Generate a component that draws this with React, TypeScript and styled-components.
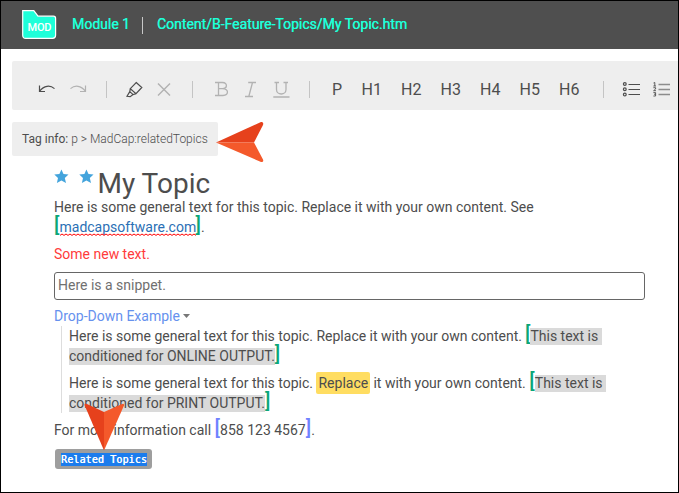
import React from "react";
import styled, { createGlobalStyle } from "styled-components";

const GlobalStyle = createGlobalStyle`
  * { box-sizing: border-box; }
  body { margin: 0; background: #fff; }
`;

const Frame = styled.div`
  position: relative;
  width: 679px;
  height: 493px;
  border: 1px solid #000;
  background: #fff;
  overflow: hidden;
  color: #4d4d4d;
  font-family: Roboto, "Liberation Sans", sans-serif;
  font-size: 14px;
`;

const Header = styled.header`
  display: flex;
  align-items: center;
  height: 48px;
  padding-left: 21px;
  background: #4f4f4f;
  color: #1effd9;
  font-weight: 400;
  line-height: 20px;
  white-space: nowrap;
`;

const HeaderText = styled.span<{ $width: number }>`
  width: ${(p) => p.$width}px;
  margin-top: -2px;
  text-shadow: 0.2px 0 currentColor;
`;

const HeaderRule = styled.span`
  width: 1px;
  height: 17px;
  margin: 0 14px;
  background: #c8c8c8;
`;

const Logo = styled.svg`
  display: block;
  width: 35px;
  height: 30px;
  margin-right: 15px;
`;

const Toolbar = styled.div`
  display: flex;
  align-items: center;
  height: 49px;
  margin: 12px 0 0 11px;
  padding: 8px 0 0 26px;
  background: #eee;
  border-radius: 2px 0 0 2px;
  white-space: nowrap;
`;

const Tool = styled.span<{ $width: number; $gap?: number }>`
  display: block;
  flex: none;
  width: ${(p) => p.$width}px;
  margin-right: ${(p) => p.$gap ?? 0}px;
  font-size: 16px;
  line-height: 18px;
  svg { display: block; overflow: visible; }
`;

const ToolRule = styled.span<{ $gap: number }>`
  flex: none;
  width: 1px;
  height: 17px;
  margin-right: ${(p) => p.$gap}px;
  background: #c4c4c4;
`;

const TagInfo = styled.div`
  width: 206px;
  height: 34px;
  margin: 12px 0 0 11px;
  padding-left: 10px;
  background: #eee;
  border-radius: 2px;
  font-size: 12px;
  line-height: 34px;
  white-space: nowrap;
`;

const TagPath = styled.span`
  font-weight: 300;
`;

const Topic = styled.main`
  margin-left: 53px;
  white-space: pre;
`;

const Title = styled.h1`
  display: flex;
  height: 41px;
  margin: 0;
  padding-top: 12px;
  font-size: 28px;
  font-weight: 400;
  line-height: 30px;
`;

const Star = styled.svg`
  width: 15px;
  height: 15px;
  margin: 1px 10px 0 0;
`;

const TitleText = styled.span`
  margin: 1px 0 0 -6.5px;
`;

const Line = styled.div<{ $top?: number; $color?: string }>`
  display: flex;
  align-items: center;
  height: 20px;
  margin-top: ${(p) => p.$top ?? 0}px;
  color: ${(p) => p.$color ?? "inherit"};
  line-height: 20px;
`;

const Link = styled.span`
  color: #2a6fb5;
`;

const Misspelled = styled.span`
  position: relative;
  display: block;
  width: 136px;
  height: 20px;
`;

const Squiggle = styled.svg`
  position: absolute;
  left: 0;
  top: 16px;
  width: 137px;
  height: 4px;
`;

const Bracket = styled.span<{ $color: string; $left?: number }>`
  flex: none;
  width: 5.5px;
  height: 20px;
  margin-left: ${(p) => p.$left ?? 0}px;
  color: ${(p) => p.$color};
  font-size: 20px;
  font-weight: 500;
  line-height: 17px;
`;

const Conditioned = styled.span`
  height: 17px;
  background: #dadada;
  line-height: 17px;
`;

const Highlight = styled.span`
  width: 54px;
  height: 22px;
  margin: 0 3.5px 0 -0.5px;
  padding-left: 2.5px;
  background: #ffdd61;
  border-radius: 2px;
  line-height: 22px;
`;

const Snippet = styled.div`
  width: 591px;
  height: 28px;
  margin-top: 8px;
  padding-left: 3px;
  border: 1px solid #666;
  border-radius: 3px;
  color: #707070;
  line-height: 25px;
`;

const Caret = styled.svg`
  width: 7px;
  height: 4px;
  margin: 0 0 0 3px;
`;

const DropDownBody = styled.div`
  height: 87px;
  margin: 1px 0 0 7px;
  padding-left: 7px;
  border-left: 1px solid #ddd;
`;

const RelatedButton = styled.button`
  display: block;
  width: 97px;
  height: 20px;
  margin: 9px 0 0 1px;
  padding: 0 5px 0 6px;
  border: 0;
  border-radius: 3px;
  background: #9e9e9e;
  color: #fff;
  font-family: "DejaVu Sans Mono", monospace;
  font-size: 10px;
  line-height: 13px;
`;

const Selected = styled.span`
  display: block;
  width: 86px;
  height: 13px;
  background: #1b7ced;
  font-weight: 400;
  letter-spacing: 0.12px;
  text-align: left;
  text-shadow: 0.3px 0 #fff;
`;

const Pointer = styled.svg<{ $x: number; $y: number }>`
  position: absolute;
  left: ${(p) => p.$x}px;
  top: ${(p) => p.$y}px;
`;

const GREEN = "#0ba678";
const BLUE = "#7082ff";

const squigglePoints = Array.from({ length: 69 }, (_, i) => `${i * 2},${i % 2 ? 1 : 2.4}`).join(" ");

const StarIcon = () => (
  <Star viewBox="0 0 15 15">
    <path fill="#44a4dc" d="M7.4 0.5 9.5 5.1 14.5 5.5 10.8 9 12 14 7.4 11.5 2.9 14 4 9 0.3 5.5 5.4 5.1Z" />
  </Star>
);

const Bold = () => (
  <svg width="14" height="15" fill="none" stroke="#b2b2b2" strokeWidth="1.3">
    <path d="M0 .5H7.5C13 .5 12.4 6.7 7.5 6.7H3.5M7.5 6.7C14.3 6.7 13.7 13.5 8 13.5H0M3.5.5V13.5" />
  </svg>
);
const Italic = () => (
  <svg width="12" height="15" fill="none" stroke="#b2b2b2" strokeWidth="1.3">
    <path d="M3.2.5H11M0 14.5H8M7.5.5 3.8 14.5" />
  </svg>
);
const Underline = () => (
  <svg width="17" height="16" fill="none" stroke="#b2b2b2" strokeWidth="1.3">
    <path d="M1.5.5H6M10.5.5H15M3.5.5V7.5C3.5 13.5 13 13.5 13 7.5V.5M.3 15H16.5" />
  </svg>
);

const ListIcon = ({ numbered = false }: { numbered?: boolean }) => (
  <svg width="17" height="15" fill="none" stroke={numbered ? "#8c8c8c" : "#4d4d4d"} strokeWidth="1">
    <path d="M5.5 2.5H17M5.5 7.5H17M5.5 12.5H17" strokeWidth={numbered ? 1.5 : 1} />
    {numbered ? (
      <path stroke="#4d4d4d" strokeWidth=".9" d="M.5 1 1.8.5V4M.4 4H3M.4 5.7H2.6V7L.6 8.7H3M.4 10.6H2.6V14H.4M1 12.2H2.6" />
    ) : (
      <g strokeWidth="1.2">
        <circle cx="1.8" cy="2" r="1.4" />
        <circle cx="1.8" cy="7.3" r="1.4" />
        <circle cx="1.8" cy="12.6" r="1.4" />
      </g>
    )}
  </svg>
);

export default function App() {
  return (
    <Frame>
      <GlobalStyle />
      <Header>
        <Logo viewBox="0 0 35 30">
          <path d="M.7.6H11.8L16 6.2H31.5Q33.6 6.2 33.6 8.3V25.3Q33.6 28.3 30.6 28.3H3.7Q.7 28.3.7 25.3Z" fill="#1effd9" stroke="#fff" strokeWidth="1.2" />
          <text x="5.5" y="21.2" fill="#fff" fontSize="11" fontWeight="500" textLength="24">MOD</text>
        </Logo>
        <HeaderText $width={56}>Module 1</HeaderText>
        <HeaderRule />
        <HeaderText $width={251}>Content/B-Feature-Topics/My Topic.htm</HeaderText>
      </Header>

      <Toolbar>
        <Tool $width={17} $gap={14}>
          <svg width="17" height="12" fill="none" stroke="#4d4d4d" strokeWidth="1.2">
            <path d="M1.5 1.5V7.5H7M1.7 7.1C6 1.5 12 .8 16.5 4.6" />
          </svg>
        </Tool>
        <Tool $width={17} $gap={20}>
          <svg width="17" height="12" fill="none" stroke="#b2b2b2" strokeWidth="1.2">
            <path d="M16.5 1.5V7.5H11M16.3 7.1C12 1.5 6 .8 1.5 4.6" />
          </svg>
        </Tool>
        <ToolRule $gap={19} />
        <Tool $width={17} $gap={14}>
          <svg width="17" height="16" fill="none" stroke="#4d4d4d" strokeWidth="1.2">
            <path d="M10.2 .5 15.8 5.5 10 11.7 4.3 6.6ZM4.3 6.6 3.8 9.6 7.2 12.6 10 11.7M3.8 9.6 1 14.3 4.2 14.7 7 12.6" />
          </svg>
        </Tool>
        <Tool $width={14} $gap={21}>
          <svg width="14" height="14" stroke="#b2b2b2" strokeWidth="1.5">
            <path d="M1 .5 13 12.5M13 .5 1 12.5" />
          </svg>
        </Tool>
        <ToolRule $gap={22} />
        <Tool $width={14} $gap={16}><Bold /></Tool>
        <Tool $width={12} $gap={16}><Italic /></Tool>
        <Tool $width={17} $gap={19}><Underline /></Tool>
        <ToolRule $gap={22} />
        <Tool $width={29.5}>P</Tool>
        <Tool $width={39.5}>H1</Tool>
        <Tool $width={39.5}>H2</Tool>
        <Tool $width={39.5}>H3</Tool>
        <Tool $width={39.5}>H4</Tool>
        <Tool $width={39.5}>H5</Tool>
        <Tool $width={44}>H6</Tool>
        <ToolRule $gap={19} />
        <Tool $width={17} $gap={13}><ListIcon /></Tool>
        <Tool $width={17}><ListIcon numbered /></Tool>
      </Toolbar>

      <TagInfo>Tag info: <TagPath>p &gt; MadCap:relatedTopics</TagPath></TagInfo>

      <Topic>
        <Title>
          <StarIcon />
          <StarIcon />
          <TitleText>My Topic</TitleText>
        </Title>
        <Line>Here is some general text for this topic. Replace it with your own content. See</Line>
        <Line>
          <Bracket $color={GREEN}>[</Bracket>
          <Misspelled>
            <Link>madcapsoftware.com</Link>
            <Squiggle><polyline points={squigglePoints} fill="none" stroke="#f00" strokeWidth="1" /></Squiggle>
          </Misspelled>
          <Bracket $color={GREEN}>]</Bracket>.
        </Line>
        <Line $top={7} $color="#ff3b3b">Some new text.</Line>
        <Snippet>Here is a snippet.</Snippet>
        <Line $top={6} $color="#6691ee">
          Drop-Down Example
          <Caret viewBox="0 0 7 4"><path d="M0 0H7L3.5 4Z" fill="#777" /></Caret>
        </Line>
        <DropDownBody>
          <Line $top={-1}>
            {"Here is some general text for this topic. Replace it with your own content. "}
            <Bracket $color={GREEN} $left={-0.5}>[</Bracket>
            <Conditioned>{"This text is "}</Conditioned>
          </Line>
          <Line>
            <Conditioned>conditioned for ONLINE OUTPUT.</Conditioned>
            <Bracket $color={GREEN}>]</Bracket>
          </Line>
          <Line $top={7}>
            {"Here is some general text for this topic. "}
            <Highlight>Replace</Highlight>
            {"it with your own content. "}
            <Bracket $color={GREEN}>[</Bracket>
            <Conditioned>{"This text is "}</Conditioned>
          </Line>
          <Line>
            <Conditioned>conditioned for PRINT OUTPUT.</Conditioned>
            <Bracket $color={GREEN}>]</Bracket>
          </Line>
        </DropDownBody>
        <Line $top={7}>
          {"For more information call "}
          <Bracket $color={BLUE}>[</Bracket>
          858 123 4567
          <Bracket $color={BLUE}>]</Bracket>.
        </Line>
        <RelatedButton><Selected>Related Topics</Selected></RelatedButton>
      </Topic>

      <Pointer $x={214} $y={120} width="50" height="44">
        <path fill="#e6411c" d="M1 21.5 46 1Q49 .5 48 4L39 21.5Z" />
        <path fill="#f4592b" d="M1 21.5H39L48 38.5Q49 41.5 46 41Z" />
      </Pointer>
      <Pointer $x={82} $y={401} width="44" height="50">
        <path fill="#e6411c" d="M21 48.5 1.5 3Q1.5 1 4 2L21 10Z" />
        <path fill="#f4592b" d="M21 48.5V10L39 2Q41.5 1 41 3.5Z" />
      </Pointer>
    </Frame>
  );
}
